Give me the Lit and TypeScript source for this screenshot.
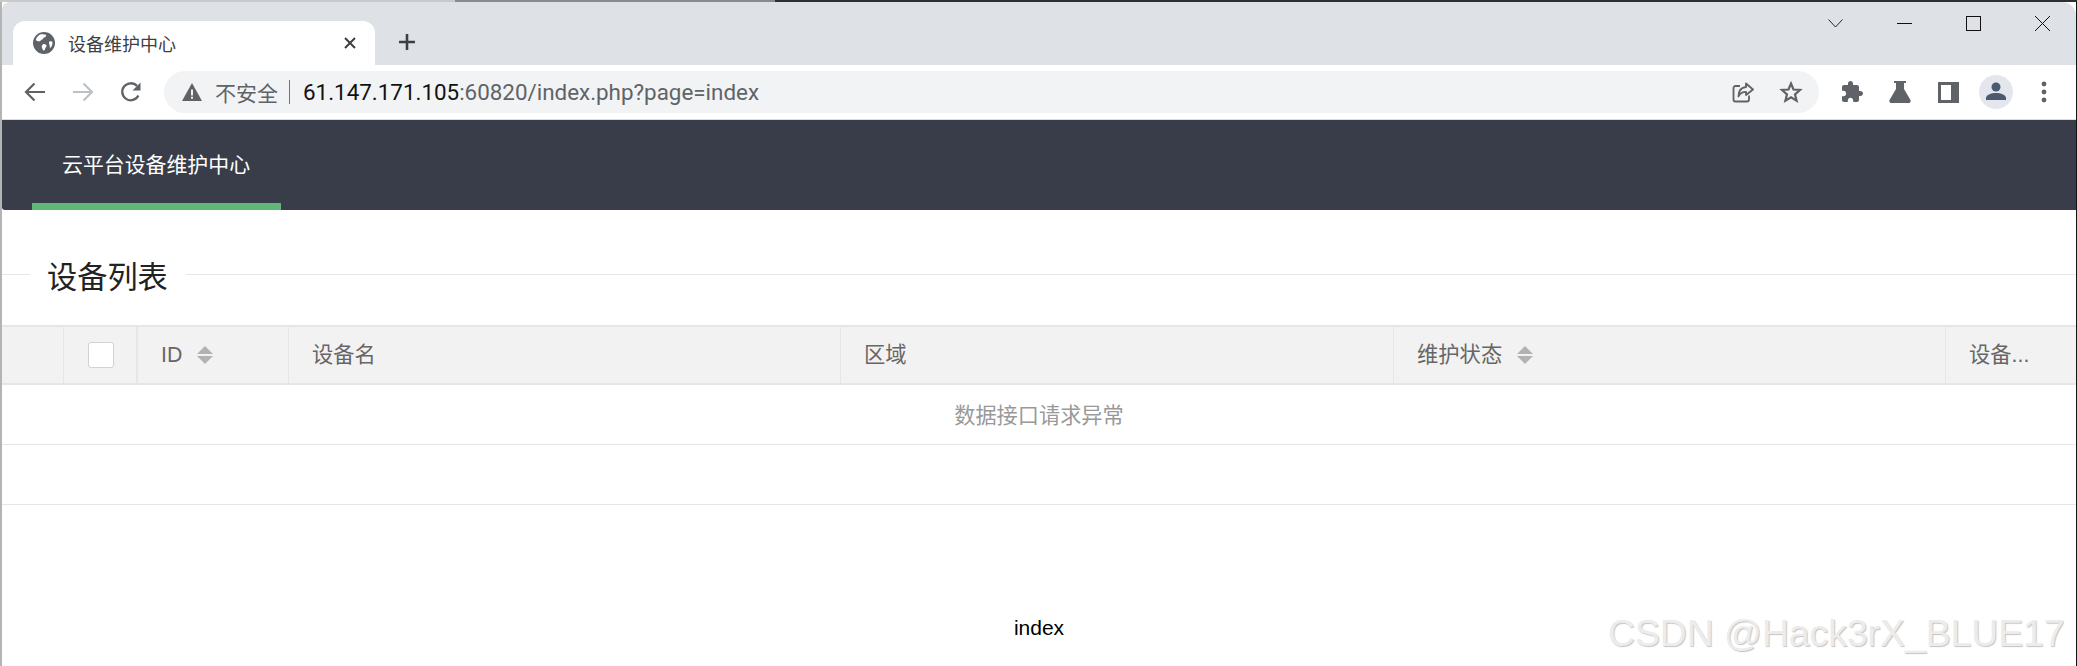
import { LitElement, html, css, svg } from "lit";
import { customElement } from "lit/decorators.js";

const ic = (w: number, h: number, vb: string, body: unknown) =>
  html`<svg width=${w} height=${h} viewBox=${vb}>${body}</svg>`;

const sortIcon = html`<span class="sort">
  <svg width="16" height="18" viewBox="0 0 16 18">
    <path d="M8 0L16 8H0Z M0 10H16L8 18Z" fill="#b2b2b2" />
  </svg>
</span>`;

@customElement("app-root")
export class AppRoot extends LitElement {
  static styles = css`
    :host { display: block; position: relative; width: 2077px; height: 666px; overflow: hidden; background: #fff;
      font-family: "Liberation Sans", "Noto Sans CJK SC", sans-serif; }
    .screen-strip { height: 2px; display: flex; }
    .strip-a { width: 455px; background: #c9c9c9; }
    .strip-b { width: 320px; background: #8a8a8a; }
    .strip-c { flex: 1; background: #2e2e30; }
    .window { height: 664px; display: flex; flex-direction: column; border-left: 2px solid #b4b4b4; border-right: 1px solid #111; box-sizing: border-box; background: #fff; }
    .tabstrip { height: 63px; flex: none; background: #dee1e6; display: flex; align-items: flex-end; padding-left: 11px; border-radius: 8px 14px 0 0; }
    .tab { width: 362px; height: 44px; background: #fff; border-radius: 12px 12px 0 0; display: flex; align-items: center; box-sizing: border-box; padding-left: 20px; }
    .tab-title { font: 18px/24px "Noto Sans CJK SC", sans-serif; color: #3c4043; margin-left: 13px; flex: 1; }
    .tab-close { width: 14px; height: 14px; margin-right: 18px; display: flex; }
    .newtab { margin-left: 23px; margin-bottom: 14px; display: flex; }
    .winctl { margin-left: auto; align-self: flex-start; display: flex; height: 30px; align-items: center; margin-top: 6px; margin-right: 26px; }
    .winctl svg { display: block; }
    .ctl-chevron, .ctl-min, .ctl-max { margin-right: 54px; }
    .toolbar { height: 54px; flex: none; display: flex; align-items: center; padding-left: 9px; box-sizing: border-box; }
    .ibox { width: 48px; height: 48px; display: flex; align-items: center; justify-content: center; flex: none; }
    .omni { width: 1655px; height: 42px; margin-left: 9px; margin-right: 9px; flex: none; background: #f1f3f4; border-radius: 21px; display: flex; align-items: center; box-sizing: border-box; padding-left: 18px; }
    .notsafe { font: 21px/28px "Noto Sans CJK SC", sans-serif; color: #5f6368; margin-left: 13px; }
    .sep { width: 1px; height: 24px; background: #70757a; margin: 0 13px 0 11px; }
    .url { font: 22.4px/28px Roboto, sans-serif; color: #5f6368; flex: 1; white-space: nowrap; }
    .url b { font-weight: 400; color: #111; }
    .omni .ibox:last-child { margin-right: 4px; }
    .avatar { width: 34px; height: 34px; border-radius: 50%; background: #e3e6ec; display: flex; align-items: center; justify-content: center; }
    .tb-line { height: 1px; flex: none; background: #dadce0; }
    .nav { height: 90px; flex: none; background: #393d49; border-radius: 0 0 0 3px; display: flex; padding-left: 30px; }
    .nav-item { height: 90px; box-sizing: border-box; width: 249px; border-bottom: 7px solid #5fb878; padding: 0 30px; color: #fff; font: 20.9px/86px "Noto Sans CJK SC", sans-serif; white-space: nowrap; }
    .field { height: 1px; background: #e6e6e6; margin-top: 64px; display: flex; align-items: center; padding-left: 28px; flex: none; }
    .legend { font: 30.2px/40px "Noto Sans CJK SC", sans-serif; color: #222; background: #fff; padding: 0 18px 0 17px; }
    .table { margin-top: 50px; flex: none; border-top: 2px solid #e6e6e6; }
    .thead { display: grid; grid-template-columns: 62px 74px 151px 552px 553px 552px 1fr; height: 58px; background: #f2f2f2; border-bottom: 2px solid #e6e6e6; box-sizing: border-box; }
    .th { border-right: 1px solid #e6e6e6; display: flex; align-items: center; padding-left: 23px; box-sizing: border-box; font: 21.3px/28px "Liberation Sans", "Noto Sans CJK SC", sans-serif; color: #666; white-space: nowrap; }
    .th.last { border-right: none; }
    .th.check { border-right: 2px solid #e6e6e6; padding-left: 24px; }
    .box { width: 26px; height: 26px; background: #fff; border: 1px solid #d2d2d2; border-radius: 3px; box-sizing: border-box; }
    .sort { display: flex; margin-left: 15px; }
    .row { height: 59px; border-bottom: 1px solid #e6e6e6; box-sizing: border-box; display: flex; align-items: center; justify-content: center; font: 21.2px/28px "Noto Sans CJK SC", sans-serif; color: #999; }
    .row.empty { height: 60px; }
    .row.first { height: 60px; padding-bottom: 2px; }
    .foot { margin-top: 111px; text-align: center; font: 21px/24px "Liberation Sans", sans-serif; color: #000; }
    .mark { position: absolute; left: 1608px; top: 610px; font: 37.3px/46px "Liberation Sans", sans-serif; color: #ececec; text-shadow: 1px 1px 1px #c4c4c4; white-space: nowrap; }
  `;

  render() {
    return html`
      <div class="screen-strip"><div class="strip-a"></div><div class="strip-b"></div><div class="strip-c"></div></div>
      <div class="window">
        <div class="tabstrip">
          <div class="tab">
            ${ic(22, 22, "0 0 22 22", svg`<circle cx="11" cy="11" r="11" fill="#5f6368"/><path d="M7 2.500c2-.6 4-.4 6 .2.6 1.200-.5 2.500-2 2.800-1 .4-.6 1.800-2 2-1.400.3-1.200 1.600-2.400 1.800C5.300 9.500 3.500 8.800 2.800 8c.6-2.500 2.300-4.500 4.200-5.500z M10 12.300c1.500-.6 3.200.2 3.500 1.500.2 1-1 1.500-1.200 2.500-.2 1-.6 2.300-1.800 2.200-1-.6-1-2-1.600-3-.5-1.200.2-2.500 1.100-3.200z M16.500 9.500c1.500-.4 2.800.2 3 1 .1 2-.8 4-2.200 5.500-.8-.5-.3-2-.8-3-.4-1.200-.8-3 0-3.500z" fill="#fff"/>`)}
            <span class="tab-title">设备维护中心</span>
            <span class="tab-close">${ic(14, 14, "0 0 14 14", svg`<path d="M2 2L12 12M12 2L2 12" stroke="#3c4043" stroke-width="2"/>`)}</span>
          </div>
          <span class="newtab">${ic(18, 18, "0 0 18 18", svg`<path d="M9 1V17M1 9H17" stroke="#3c4043" stroke-width="2.600"/>`)}</span>
          <div class="winctl">
            <span class="ctl-chevron">${ic(15, 9, "0 0 15 9", svg`<path d="M.5.5L7.500 8L14.500.5" fill="none" stroke="#222" stroke-width="1"/>`)}</span>
            <span class="ctl-min">${ic(15, 15, "0 0 15 15", svg`<path d="M0 7.500H15" stroke="#111" stroke-width="1"/>`)}</span>
            <span class="ctl-max">${ic(15, 15, "0 0 15 15", svg`<rect x=".5" y=".5" width="14" height="14" fill="none" stroke="#111"/>`)}</span>
            <span>${ic(15, 15, "0 0 15 15", svg`<path d="M0 0L15 15M15 0L0 15" stroke="#111" stroke-width="1"/>`)}</span>
          </div>
        </div>
        <div class="toolbar">
          <span class="ibox">${ic(22, 20, "0 0 22 20", svg`<path d="M21 10H3M10.500 1.500L2 10l8.500 8.500" fill="none" stroke="#5f6368" stroke-width="2.200"/>`)}</span>
          <span class="ibox">${ic(22, 20, "0 0 22 20", svg`<path d="M1 10H19M11.500 1.500L20 10l-8.500 8.500" fill="none" stroke="#bdc1c6" stroke-width="2.200"/>`)}</span>
          <span class="ibox">${ic(22, 22, "0 0 22 22", svg`<path d="M18.400 14.500A8.500 8.500 0 1 1 17 5" fill="none" stroke="#5f6368" stroke-width="2.300"/><path d="M20.500 1.500V9.500H12.500Z" fill="#5f6368"/>`)}</span>
          <div class="omni">
            ${ic(20, 18, "0 0 20 18", svg`<path d="M10 0L20 18H0Z" fill="#5f6368"/><path d="M9 6.500h2v6H9zM9 13.700h2v2H9z" fill="#f1f3f4"/>`)}
            <span class="notsafe">不安全</span>
            <span class="sep"></span>
            <span class="url"><b>61.147.171.105</b>:60820/index.php?page=index</span>
            <span class="ibox">${ic(22, 21, "0 0 22 21", svg`<path d="M8 4H3.500A2 2 0 0 0 1.500 6V17.500A2 2 0 0 0 3.500 19.500H15A2 2 0 0 0 17 17.500V13.500" fill="none" stroke="#5f6368" stroke-width="1.800"/><path d="M14 1.500L21 7.500L14 13V9.800C10.500 9.800 8 11 6.500 14.500C6.500 9.500 9 5.500 14 5Z" fill="none" stroke="#5f6368" stroke-width="1.800" stroke-linejoin="round"/>`)}</span>
            <span class="ibox">${ic(24, 24, "0 0 24 24", svg`<path d="M12 3.500L14.500 9.500L21 10L16 14.300L17.600 20.700L12 17.300L6.400 20.700L8 14.300L3 10L9.500 9.500Z" fill="none" stroke="#5f6368" stroke-width="2.200" stroke-linejoin="miter"/>`)}</span>
          </div>
          <span class="ibox">${ic(24, 24, "0 0 24 24", svg`<path fill="#5f6368" d="M20.500 11H19V7c0-1.100-.9-2-2-2h-4V3.500C13 2.120 11.880 1 10.500 1S8 2.120 8 3.500V5H4c-1.100 0-1.990.9-1.990 2v3.800H3.500c1.490 0 2.700 1.210 2.700 2.700s-1.210 2.700-2.700 2.700H2V20c0 1.100.9 2 2 2h3.800v-1.500c0-1.490 1.210-2.700 2.700-2.700 1.490 0 2.700 1.210 2.700 2.700V22H17c1.100 0 2-.9 2-2v-4h1.500c1.380 0 2.500-1.120 2.500-2.500S21.880 11 20.500 11z"/>`)}</span>
          <span class="ibox">${ic(22, 22, "0 0 22 22", svg`<path fill="#5f6368" d="M5 0H17V2H15V8L21.500 19C22.200 20.500 21 22 19.500 22H2.500C1 22-.2 20.500.5 19L7 8V2H5Z"/>`)}</span>
          <span class="ibox">${ic(21, 21, "0 0 21 21", svg`<path fill-rule="evenodd" fill="#5f6368" d="M0 0H21V21H0ZM3 3V18H13V3Z"/>`)}</span>
          <span class="ibox"><span class="avatar">${ic(20, 20, "0 0 20 20", svg`<circle cx="10" cy="5" r="4.500" fill="#4c5a70"/><path d="M0 18V16C0 13 5 11 10 11S20 13 20 16V18Z" fill="#4c5a70"/>`)}</span></span>
          <span class="ibox">${ic(6, 22, "0 0 6 22", svg`<circle cx="3" cy="3" r="2.400" fill="#5f6368"/><circle cx="3" cy="11" r="2.400" fill="#5f6368"/><circle cx="3" cy="19" r="2.400" fill="#5f6368"/>`)}</span>
        </div>
        <div class="tb-line"></div>
        <div class="nav"><div class="nav-item">云平台设备维护中心</div></div>
        <div class="field"><span class="legend">设备列表</span></div>
        <div class="table">
          <div class="thead">
            <div class="th"></div>
            <div class="th check"><span class="box"></span></div>
            <div class="th">ID ${sortIcon}</div>
            <div class="th">设备名</div>
            <div class="th">区域</div>
            <div class="th">维护状态 ${sortIcon}</div>
            <div class="th last">设备...</div>
          </div>
          <div class="row first">数据接口请求异常</div>
          <div class="row empty"></div>
        </div>
        <div class="foot">index</div>
      </div>
      <div class="mark">CSDN @Hack3rX_BLUE17</div>
    `;
  }
}
